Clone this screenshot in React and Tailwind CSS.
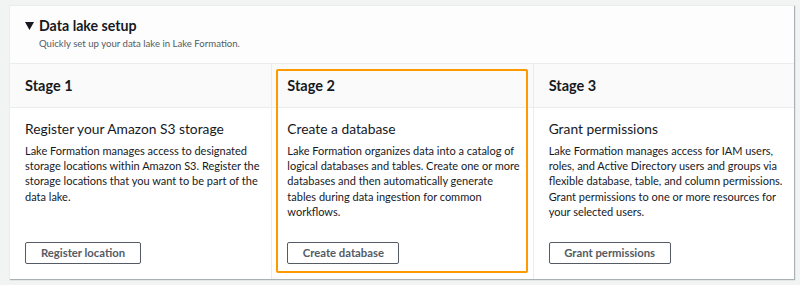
import React from "react";

const stages = [
  {
    stage: "Stage 1",
    title: "Register your Amazon S3 storage",
    lines: [
      "Lake Formation manages access to designated",
      "storage locations within Amazon S3. Register the",
      "storage locations that you want to be part of the",
      "data lake.",
    ],
    button: "Register location",
    bw: "w-[116px]",
  },
  {
    stage: "Stage 2",
    title: "Create a database",
    lines: [
      "Lake Formation organizes data into a catalog of",
      "logical databases and tables. Create one or more",
      "databases and then automatically generate",
      "tables during data ingestion for common",
      "workflows.",
    ],
    button: "Create database",
    bw: "w-[112px]",
    focused: true,
  },
  {
    stage: "Stage 3",
    title: "Grant permissions",
    lines: [
      "Lake Formation manages access for IAM users,",
      "roles, and Active Directory users and groups via",
      "flexible database, table, and column permissions.",
      "Grant permissions to one or more resources for",
      "your selected users.",
    ],
    button: "Grant permissions",
    bw: "w-[122px]",
  },
];

export default function App() {
  return (
    <div
      className="w-[800px] h-[285px] bg-[#f2f3f3] pt-[5px] pl-[9px] text-[#16191f]"
      style={{ fontFamily: 'Lato, "Noto Sans", sans-serif' }}
    >
      <div className="w-[785px] h-[274px] bg-white border-t border-l border-[#eaeded] shadow-[1px_1px_1px_0_rgba(0,28,36,0.3)] flex flex-col">
        <div className="h-[58px] shrink-0 bg-[#fdfdfd] border-b border-[#eaeded] pl-[15px] pt-[9px]">
          <div className="flex items-center">
            <svg width="9" height="8" viewBox="0 0 9 8" className="mr-[5px]">
              <polygon points="0,0 9,0 4.5,8" fill="#16191f" />
            </svg>
            <span className="text-[14.2px] font-bold leading-[22px]">Data lake setup</span>
          </div>
          <div className="pl-[14px] text-[9.6px] leading-[14px] text-[#545b64]">
            Quickly set up your data lake in Lake Formation.
          </div>
        </div>
        <div className="grid grid-cols-3 flex-1">
          {stages.map((s, i) => (
            <div
              key={s.stage}
              className={
                "relative flex flex-col " + (i > 0 ? "border-l border-[#eaeded]" : "")
              }
            >
              <div className="h-[44px] shrink-0 bg-[#fafafa] border-b border-[#eaeded] flex items-center px-[15px]">
                <span className="text-[14.5px] font-bold">{s.stage}</span>
              </div>
              <div className="flex-1 flex flex-col px-[15px] pt-[11px] pb-[15px]">
                <div className="text-[13.8px] leading-[20px] whitespace-nowrap">{s.title}</div>
                <div className="mt-[4px] text-[11px] leading-[15.2px] whitespace-nowrap">
                  {s.lines.map((l, k) => (
                    <div key={k}>{l}</div>
                  ))}
                </div>
                <div className="mt-auto">
                  <button
                    className={
                      s.bw +
                      " h-[22px] border border-[#545b64] rounded-[2px] bg-white text-[11.3px] font-bold text-[#545b64] flex items-center justify-center"
                    }
                  >
                    {s.button}
                  </button>
                </div>
              </div>
              {s.focused && (
                <div className="absolute left-[4px] top-[5px] right-[5px] bottom-[6px] border-2 border-[#ff9900] rounded-[2px] pointer-events-none" />
              )}
            </div>
          ))}
        </div>
      </div>
    </div>
  );
}
